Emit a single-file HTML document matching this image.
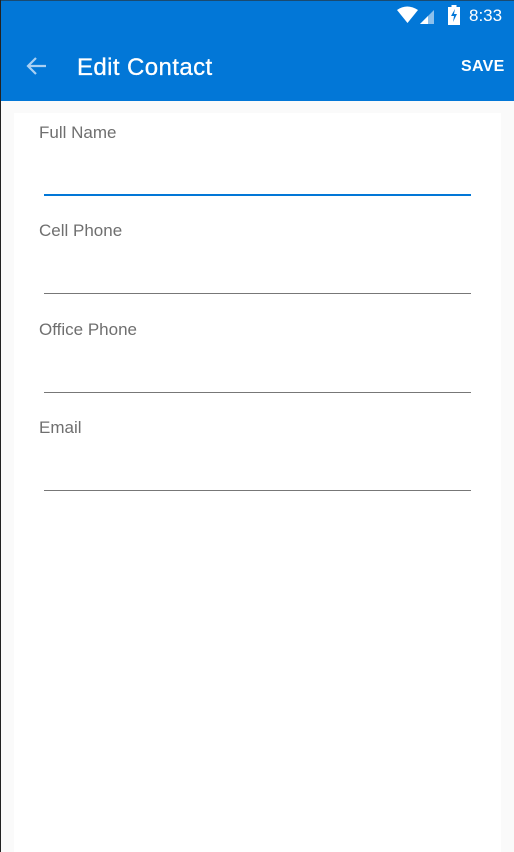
<!DOCTYPE html>
<html><head><meta charset="utf-8"><style>
*{margin:0;padding:0;box-sizing:border-box}
body{width:514px;height:852px;overflow:hidden;background:#fafafa;font-family:"Liberation Sans",Roboto,sans-serif;position:relative}
.edge{position:absolute;left:0;top:0;width:1px;height:852px;background:#222;z-index:5}
.topedge{position:absolute;left:0;top:0;width:514px;height:1px;background:#1a4a70;z-index:5}
.bar{position:absolute;left:0;top:0;width:514px;height:101px;background:#0277d7}
.time{position:absolute;left:469px;top:6px;color:#fff;font-size:17px}
.title{position:absolute;left:77px;top:54px;color:#fff;font-size:24px;letter-spacing:0.4px;-webkit-text-stroke:0.3px #fff}
.save{position:absolute;left:461px;top:58px;color:#fff;font-size:16px;font-weight:bold;letter-spacing:.3px}
.card{position:absolute;left:14px;top:113px;width:487px;height:739px;background:#fff}
.lbl{position:absolute;left:39px;color:#6f6f6f;font-size:17px}
.ln{position:absolute;left:44px;width:427px;height:1px;background:#777}
</style></head><body>
<div class="bar"></div>
<div class="topedge"></div>
<div class="edge"></div>
<svg style="position:absolute;left:396px;top:6px" width="44" height="20" viewBox="0 0 44 20">
<path d="M1 4 Q11 -3 22 4 L11.5 17 Z" fill="#fff"/>
<path d="M24 18 L38 4 L38 18 Z" fill="#8cc0ec"/>
<path d="M24 18 L32 10 L32 18 Z" fill="#fff"/>
</svg>
<svg style="position:absolute;left:448px;top:5px" width="12" height="20" viewBox="0 0 12 20">
<rect x="3.5" y="0" width="5" height="2" fill="#fff"/>
<rect x="0" y="2" width="12" height="18" fill="#fff"/>
<path d="M7 4 L3 11 L6 11 L5 17 L9 9 L6 9 Z" fill="#0277d7"/>
</svg>
<div class="time">8:33</div>
<svg style="position:absolute;left:25px;top:56px" width="22" height="20" viewBox="0 0 22 20">
<path d="M21 10 H3 M11 2 L3 10 L11 18" stroke="#a9d0f3" stroke-width="2.2" fill="none"/>
</svg>
<div class="title">Edit Contact</div>
<div class="save">SAVE</div>
<div class="card"></div>
<div class="lbl" style="top:123px">Full Name</div>
<div class="ln" style="top:194px;height:2px;background:#0277d7"></div>
<div class="lbl" style="top:221px">Cell Phone</div>
<div class="ln" style="top:293px"></div>
<div class="lbl" style="top:320px">Office Phone</div>
<div class="ln" style="top:392px"></div>
<div class="lbl" style="top:418px">Email</div>
<div class="ln" style="top:490px"></div>
</body></html>
